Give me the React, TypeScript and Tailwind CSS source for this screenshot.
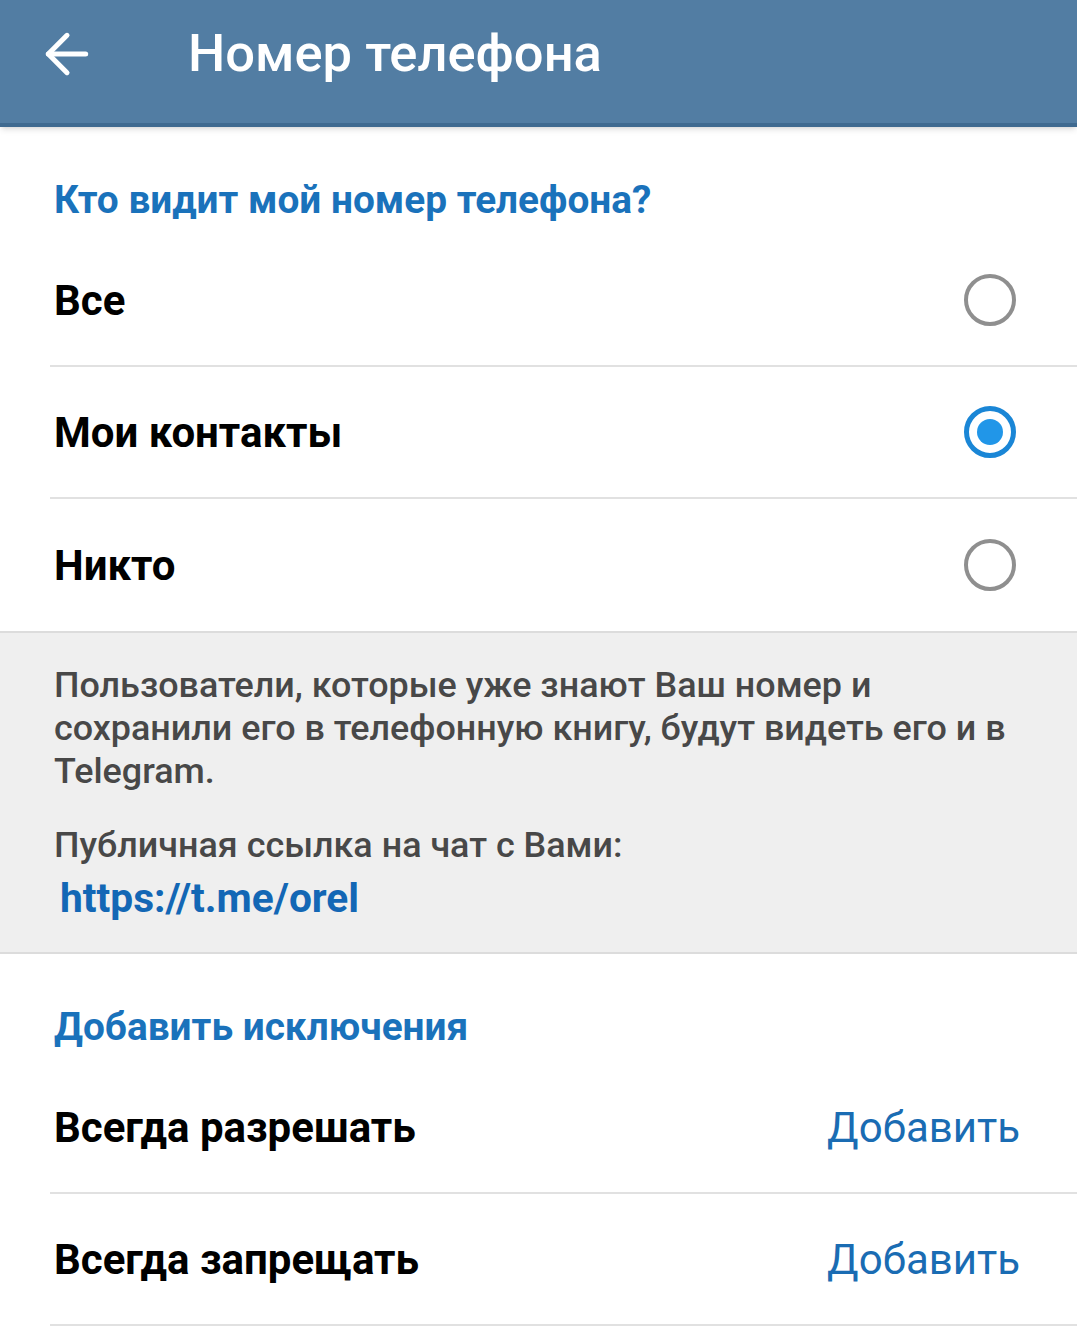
import { ArrowLeft } from "lucide-react";

const FONT = { fontFamily: "Roboto, 'Noto Sans', Arial, sans-serif" };

function Radio({ checked }: { checked?: boolean }) {
  if (checked) {
    return (
      <span className="grid h-[52px] w-[52px] place-items-center rounded-full border-[5px] border-[#1a86d6]">
        <span className="h-[26px] w-[26px] rounded-full bg-[#2196e8]" />
      </span>
    );
  }
  return <span className="block h-[52px] w-[52px] rounded-full border-[4px] border-[#8f8f8f]" />;
}

function SectionTitle({ children }: { children: React.ReactNode }) {
  return (
    <div className="px-[54px] pb-[15px] pt-[53px] text-[38.8px] font-bold leading-[40px] text-[#1a72bb]">
      {children}
    </div>
  );
}

function OptionRow({ label, checked, last }: { label: string; checked?: boolean; last?: boolean }) {
  return (
    <div className="pl-[50px]">
      <div
        className={`flex h-[132px] items-center justify-between pl-[4px] pr-[61px] ${
          last ? "" : "border-b-2 border-[#e1e1e1]"
        }`}
      >
        <span className="text-[42px] font-bold text-black">{label}</span>
        <Radio checked={checked} />
      </div>
    </div>
  );
}

function ExceptionRow({ label }: { label: string }) {
  return (
    <div className="pl-[50px]">
      <div className="flex h-[132px] items-center justify-between border-b-2 border-[#e1e1e1] pl-[4px] pr-[57px]">
        <span className="text-[42px] font-bold text-black">{label}</span>
        <span className="text-[42px] font-normal text-[#1a6cb3]">Добавить</span>
      </div>
    </div>
  );
}

export default function App() {
  return (
    <div className="h-[1328px] w-[1077px] overflow-hidden bg-white" style={FONT}>
      <header className="flex h-[127px] items-center border-b-4 border-[#3f6a90] bg-[#527da3] pb-[16px] shadow-md">
        <ArrowLeft className="ml-[35px] h-[64px] w-[64px] text-white" strokeWidth={1.9} />
        <h1 className="ml-[89px] text-[52.5px] font-medium text-white">Номер телефона</h1>
      </header>

      <SectionTitle>Кто видит мой номер телефона?</SectionTitle>
      <OptionRow label="Все" />
      <OptionRow label="Мои контакты" checked />
      <OptionRow label="Никто" last />

      <div className="border-y-2 border-[#dcdcdc] bg-[#efefef] px-[54px] pb-[32px] pt-[31px]">
        <p className="text-[35.9px] font-medium leading-[43px] text-[#484848]">
          Пользователи, которые уже знают Ваш номер и сохранили его в телефонную книгу, будут видеть его и в
          Telegram.
        </p>
        <p className="mt-[31px] text-[35.9px] font-medium leading-[43px] text-[#484848]">
          Публичная ссылка на чат с Вами:
        </p>
        <p className="mt-[10px] pl-[6px] text-[40.7px] font-bold leading-[43px] text-[#1367b5]">
          https://t.me/orel
        </p>
      </div>

      <SectionTitle>Добавить исключения</SectionTitle>
      <ExceptionRow label="Всегда разрешать" />
      <ExceptionRow label="Всегда запрещать" />
    </div>
  );
}
